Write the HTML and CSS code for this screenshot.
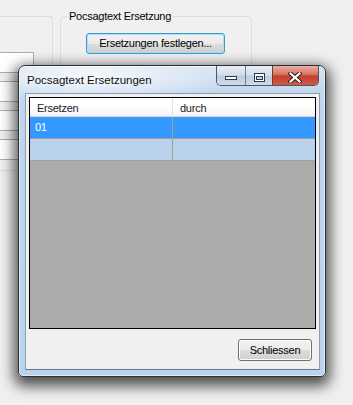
FILE: index.html
```html
<!DOCTYPE html>
<html lang="de">
<head>
    <meta charset="UTF-8">
    <meta name="viewport" content="width=device-width, initial-scale=1.0">
    <title>Pocsagtext Ersetzungen</title>
    <link rel="stylesheet" href="styles.css">
</head>
<body>
    <div class="form">
        <div class="group group-left">
            <div class="textbox"></div>
            <div class="textbox"></div>
            <div class="textbox"></div>
            <div class="textbox"></div>
        </div>
        <div class="group group-pocsag">
            <span class="group-title">Pocsagtext Ersetzung</span>
            <button class="btn btn-default">Ersetzungen festlegen...</button>
        </div>
    </div>

    <div class="dialog">
        <div class="titlebar">
            <span class="caption">Pocsagtext Ersetzungen</span>
            <div class="caption-buttons">
                <div class="cap cap-min">
                    <svg width="12" height="4" viewBox="0 0 12 4">
                        <rect x="0.5" y="0.5" width="11" height="3" fill="#fff" stroke="#2f3a48"/>
                    </svg>
                </div>
                <div class="cap cap-max">
                    <svg width="11" height="9" viewBox="0 0 11 9">
                        <rect x="0.5" y="0.5" width="10" height="8" fill="#fff" stroke="#2f3a48"/>
                        <rect x="2.5" y="3.5" width="6" height="3" fill="#c9d6e6" stroke="#2f3a48"/>
                    </svg>
                </div>
                <div class="cap cap-close">
                    <svg width="14" height="11" viewBox="0 0 14 11">
                        <path d="M2.5 1.5 L11.5 9.5 M11.5 1.5 L2.5 9.5" stroke="#3a1a16" stroke-width="4.2" stroke-linecap="square"/>
                        <path d="M2.5 1.5 L11.5 9.5 M11.5 1.5 L2.5 9.5" stroke="#fff" stroke-width="2.2" stroke-linecap="square"/>
                    </svg>
                </div>
            </div>
        </div>
        <div class="client">
            <div class="grid">
                <div class="grid-row grid-head">
                    <div class="cell">Ersetzen</div>
                    <div class="cell">durch</div>
                </div>
                <div class="grid-row row-selected">
                    <div class="cell">01</div>
                    <div class="cell"></div>
                </div>
                <div class="grid-row row-new">
                    <div class="cell"></div>
                    <div class="cell"></div>
                </div>
            </div>
            <div class="client-footer">
                <button class="btn btn-close">Schliessen</button>
            </div>
        </div>
    </div>
</body>
</html>
```

FILE: styles.css
```css
*{
    box-sizing: border-box;
}
body{
    margin: 0;
    width: 353px;
    height: 405px;
    overflow: hidden;
    position: relative;
    background: #f0f0f0;
    font-family: "Liberation Sans", Arial, sans-serif;
    font-size: 11px;
    letter-spacing: -0.25px;
    color: #000;
}

/* form behind the dialog */
.form{
    display: flex;
    align-items: flex-start;
    gap: 7px;
    padding-top: 16px;
}
.group{
    border: 1px solid #d5dfe5;
    border-radius: 4px;
}
.group-left{
    width: 53px;
    height: 155px;
    border-left: none;
    border-radius: 0 4px 4px 0;
    padding-top: 35px;
    display: flex;
    flex-direction: column;
    gap: 8px;
}
.textbox{
    width: 34px;
    height: 21px;
    background: #fff;
    border: 1px solid #abadb3;
    border-left: none;
}
.group-pocsag{
    width: 192px;
    height: 200px;
    display: flex;
    flex-direction: column;
    align-items: flex-start;
}
.group-title{
    margin: -7px 0 0 6px;
    padding: 0 2px;
    line-height: 13px;
    background: #f0f0f0;
}
.btn{
    font-family: inherit;
    font-size: 11px;
    letter-spacing: -0.25px;
    color: #000;
    padding: 0;
    line-height: 19px;
    border: 1px solid #707070;
    border-radius: 3px;
    background: linear-gradient(#f2f2f2 0%, #ebebeb 50%, #dddddd 51%, #cfcfcf 100%);
    box-shadow: inset 0 0 0 1px #fcfcfc;
}
.btn-default{
    margin: 10px 0 0 25px;
    width: 139px;
    height: 21px;
    border-color: #3c9ad0;
    box-shadow: inset 0 0 0 1px #a6e2f9;
}

/* dialog window */
.dialog{
    position: absolute;
    left: 18px;
    top: 65px;
    width: 308px;
    height: 312px;
    display: flex;
    flex-direction: column;
    padding: 0 5px 6px 6px;
    border: 1px solid #2c3037;
    border-radius: 7px 7px 5px 5px;
    background:
        radial-gradient(ellipse 150px 26px at 70px 12px, rgba(255,255,255,0.85), rgba(255,255,255,0)),
        linear-gradient(#d6e4f3 0px, #c0d6ee 28px, #b9d2ee 100%);
    box-shadow: inset 0 0 0 1px rgba(255,255,255,0.55), 0 5px 14px 4px rgba(0,0,0,0.68);
}
.titlebar{
    height: 27px;
    display: flex;
    justify-content: space-between;
    align-items: flex-start;
}
.caption{
    margin-left: 2px;
    padding-top: 1px;
    line-height: 27px;
    font-size: 11.5px;
    letter-spacing: 0;
    color: #111;
}
.caption-buttons{
    display: flex;
    height: 20px;
    margin-right: 1px;
    border: 1px solid #4c5868;
    border-top: none;
    border-radius: 0 0 5px 5px;
    overflow: hidden;
}
.cap{
    display: flex;
    justify-content: center;
}
.cap-min,
.cap-max{
    background: linear-gradient(#e6edf6 0%, #d4dfec 45%, #bccde2 55%, #cddbec 100%);
}
.cap-min{
    width: 28px;
    align-items: flex-end;
    padding-bottom: 5px;
}
.cap-max{
    width: 27px;
    border-left: 1px solid #6c7b8e;
    padding-top: 7px;
}
.cap-close{
    width: 46px;
    border-left: 1px solid #6e3b35;
    padding: 6px 1px 0 0;
    background: linear-gradient(#e9aea4 0%, #d97766 42%, #c4412f 55%, #d05a44 100%);
}

.client{
    flex: 1;
    display: flex;
    flex-direction: column;
    padding: 3px 3px 8px 3px;
    background: #f0f0f0;
    border: 1px solid #8a9db3;
    border-bottom-color: #6a7a8c;
}
.grid{
    flex: 1;
    display: flex;
    flex-direction: column;
    border: 1px solid #000;
    background: #ababab;
}
.grid-row{
    display: flex;
}
.cell{
    height: 22px;
    line-height: 21px;
    padding-left: 5px;
    white-space: nowrap;
}
.cell:first-child{
    width: 143px;
    border-right: 1px solid #a0a0a0;
}
.cell:last-child{
    width: 142px;
}
.grid-head{
    height: 19px;
    border-bottom: 1px solid #d5d5d5;
    background: linear-gradient(#ffffff 0%, #ffffff 50%, #f1f2f4 100%);
}
.grid-head .cell{
    height: 18px;
    line-height: 15px;
    padding: 3px 0 0 7px;
    color: #1a1a2a;
}
.grid-head .cell:first-child{
    border-right-color: #e2e3e5;
}
.row-selected .cell,
.row-new .cell{
    border-bottom: 1px solid #a0a0a0;
}
.row-selected{
    background: #3399ff;
    color: #fff;
}
.row-new{
    background: #bad1eb;
}

.client-footer{
    display: flex;
    justify-content: flex-end;
    padding: 10px 4px 0 0;
}
.btn-close{
    width: 74px;
    height: 22px;
    line-height: 20px;
}
```
